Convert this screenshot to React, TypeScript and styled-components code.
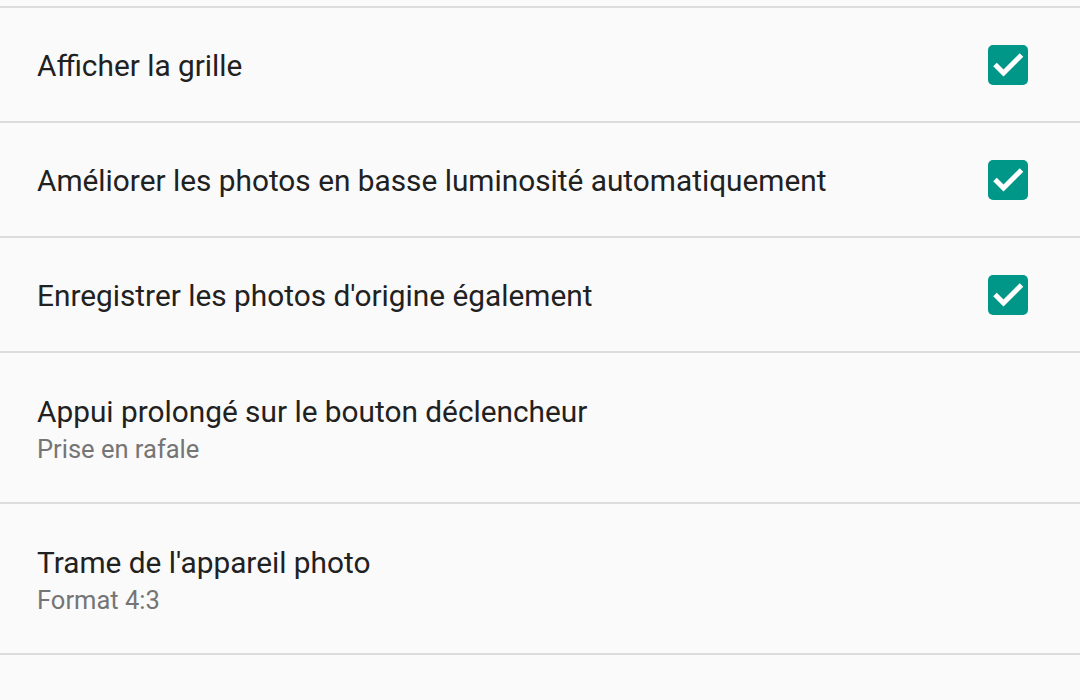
import React from "react";
import styled, { createGlobalStyle } from "styled-components";

const Global = createGlobalStyle`
  html, body { margin: 0; padding: 0; background: #fafafa; }
  body { font-family: Roboto, "Noto Sans", sans-serif; -webkit-font-smoothing: antialiased; }
`;

const List = styled.div`
  display: flex;
  flex-direction: column;
  background: #fafafa;
`;

const Stub = styled.div`
  height: 6px;
  border-bottom: 2px solid #dcdcdc;
`;

const Row = styled.div<{ $tall?: boolean }>`
  height: ${(p) => (p.$tall ? 149 : 113)}px;
  border-bottom: 2px solid #dcdcdc;
  display: flex;
  align-items: center;
  padding: 0 52px 0 37px;
  gap: 24px;
`;

const Texts = styled.div`
  flex: 1;
  display: flex;
  flex-direction: column;
  gap: 4px;
  padding-top: 2px;
`;

const Title = styled.div`
  font-size: 29.8px;
  line-height: 36px;
  color: #212121;
`;

const Summary = styled.div`
  font-size: 25.5px;
  line-height: 30px;
  color: #757575;
`;

const Box = styled.div`
  width: 40px;
  height: 40px;
  border-radius: 5px;
  background: #009688;
  display: flex;
  align-items: center;
  justify-content: center;
  flex-shrink: 0;
`;

const Check = () => (
  <Box>
    <svg width="40" height="40" viewBox="0 0 40 40">
      <path d="M7 19.5 L15.5 28 L33.5 10" fill="none" stroke="#fff" strokeWidth="5" strokeLinecap="butt" strokeLinejoin="miter" />
    </svg>
  </Box>
);

type Item = { title: string; summary?: string; checked?: boolean };

const items: Item[] = [
  { title: "Afficher la grille", checked: true },
  { title: "Améliorer les photos en basse luminosité automatiquement", checked: true },
  { title: "Enregistrer les photos d'origine également", checked: true },
  { title: "Appui prolongé sur le bouton déclencheur", summary: "Prise en rafale" },
  { title: "Trame de l'appareil photo", summary: "Format 4:3" },
];

export default function App() {
  return (
    <>
      <Global />
      <List>
        <Stub />
        {items.map((it) => (
          <Row key={it.title} $tall={!!it.summary}>
            <Texts>
              <Title>{it.title}</Title>
              {it.summary && <Summary>{it.summary}</Summary>}
            </Texts>
            {it.checked && <Check />}
          </Row>
        ))}
      </List>
    </>
  );
}
